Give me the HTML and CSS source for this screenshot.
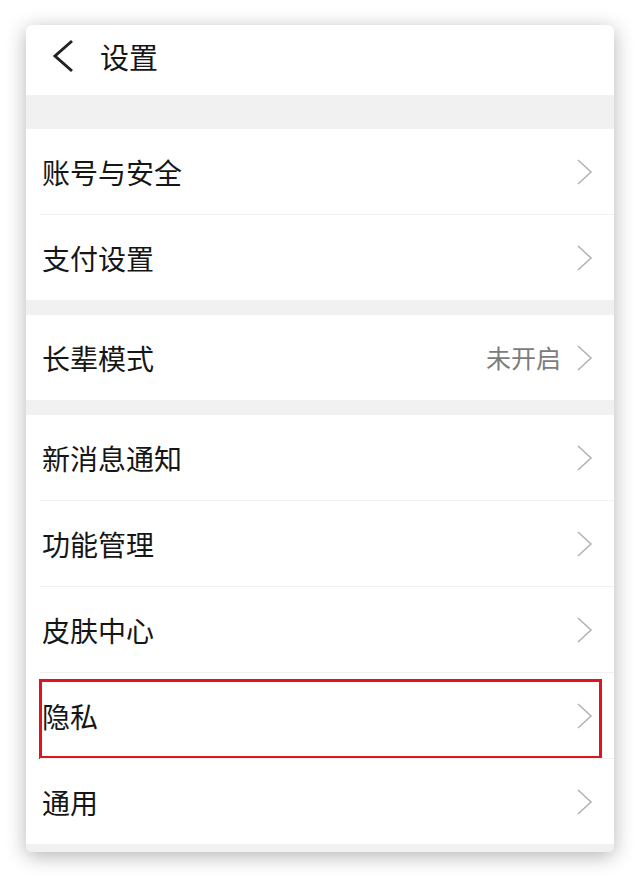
FILE: index.html
```html
<html>
<head>
  <meta charset="utf-8">
  <title>设置</title>
  <link rel="stylesheet" href="styles.css">
</head>
<body>

  <div id="card">
    <div class="header">
      <svg class="back" width="22" height="34" viewBox="0 0 22 34">
        <polyline points="20,2 3,17 20,32" fill="none" stroke="#222" stroke-width="3"/>
      </svg>
      <span class="title">设置</span>
    </div>

    <div class="gap big"></div>

    <div class="group">
      <div class="row">
        <span class="label">账号与安全</span>
        <svg class="arrow" width="16" height="26" viewBox="0 0 16 26"><polyline points="1,1 14,13 1,25" fill="none" stroke="#b4b4b4" stroke-width="1.6"/></svg>
      </div>
      <div class="row">
        <span class="label">支付设置</span>
        <svg class="arrow" width="16" height="26" viewBox="0 0 16 26"><polyline points="1,1 14,13 1,25" fill="none" stroke="#b4b4b4" stroke-width="1.6"/></svg>
      </div>
    </div>

    <div class="gap"></div>

    <div class="group">
      <div class="row">
        <span class="label">长辈模式</span>
        <span class="value">未开启</span>
        <svg class="arrow" width="16" height="26" viewBox="0 0 16 26"><polyline points="1,1 14,13 1,25" fill="none" stroke="#b4b4b4" stroke-width="1.6"/></svg>
      </div>
    </div>

    <div class="gap"></div>

    <div class="group">
      <div class="row">
        <span class="label">新消息通知</span>
        <svg class="arrow" width="16" height="26" viewBox="0 0 16 26"><polyline points="1,1 14,13 1,25" fill="none" stroke="#b4b4b4" stroke-width="1.6"/></svg>
      </div>
      <div class="row">
        <span class="label">功能管理</span>
        <svg class="arrow" width="16" height="26" viewBox="0 0 16 26"><polyline points="1,1 14,13 1,25" fill="none" stroke="#b4b4b4" stroke-width="1.6"/></svg>
      </div>
      <div class="row">
        <span class="label">皮肤中心</span>
        <svg class="arrow" width="16" height="26" viewBox="0 0 16 26"><polyline points="1,1 14,13 1,25" fill="none" stroke="#b4b4b4" stroke-width="1.6"/></svg>
      </div>
      <div class="row marked">
        <span class="label">隐私</span>
        <svg class="arrow" width="16" height="26" viewBox="0 0 16 26"><polyline points="1,1 14,13 1,25" fill="none" stroke="#b4b4b4" stroke-width="1.6"/></svg>
        <div class="highlight"></div>
      </div>
      <div class="row">
        <span class="label">通用</span>
        <svg class="arrow" width="16" height="26" viewBox="0 0 16 26"><polyline points="1,1 14,13 1,25" fill="none" stroke="#b4b4b4" stroke-width="1.6"/></svg>
      </div>
    </div>

    <div class="gap foot"></div>
  </div>

</body>
</html>
```

FILE: styles.css
```css
body {
  margin: 0;
  background-color: #ffffff;
  font-family: "Noto Sans CJK SC", "Noto Sans", sans-serif;
  color: #161616;
}

#card {
  margin: 25px 0 0 26px;
  width: 588px;
  background-color: #ffffff;
  border-radius: 6px;
  overflow: hidden;
  box-shadow: 0 4px 20px rgba(0, 0, 0, 0.3);
}

.header {
  height: 62px;
  padding-bottom: 8px;
  display: flex;
  align-items: center;
}

.back {
  margin-left: 26px;
}

.title {
  margin-left: 26px;
  font-size: 29px;
  line-height: 1;
}

.gap {
  height: 15px;
  background-color: #f1f1f1;
}

.gap.big {
  height: 34px;
}

.gap.foot {
  height: 8px;
}

.row {
  position: relative;
  height: 85px;
  display: flex;
  align-items: center;
  padding: 0 21px 0 16px;
}

.row + .row {
  border-top: 1px solid #f0f0f0;
  margin-left: 14px;
  padding-left: 2px;
}

.label {
  flex: 1;
  font-size: 28px;
  line-height: 1;
}

.value {
  font-size: 25px;
  line-height: 1;
  color: #7c7c7c;
  margin-right: 16px;
}

.arrow {
  display: block;
}

.highlight {
  position: absolute;
  left: -1px;
  right: 12px;
  top: 6px;
  bottom: -1px;
  border: 3px solid #e0141f;
}
```
